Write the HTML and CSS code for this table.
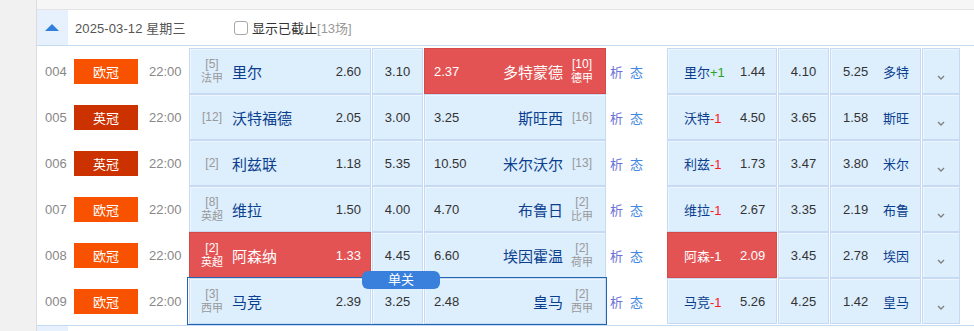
FILE: index.html
```html
<!DOCTYPE html>
<html lang="zh-CN">
<head>
<meta charset="utf-8">
<title>赛程</title>
<link rel="stylesheet" href="styles.css">
</head>
<body>
<div class="page">
  <div class="side"></div>
  <div class="main">
    <div class="topband"></div>
    <div class="head">
      <div class="toggle"><span class="tri"></span></div>
      <div class="date">2025-03-12 星期三</div>
      <label class="show"><span class="chk"></span><span class="show-t">显示已截止</span><span class="cnt">[13场]</span></label>
    </div>
    <div class="rows">
      <div class="row">
        <div class="num">004</div>
        <div class="lg"><span class="badge ucl">欧冠</span></div>
        <div class="time">22:00</div>
        <div class="cell home"><div class="rank"><span>[5]</span><span class="lgn">法甲</span></div><span class="team">里尔</span><span class="odd">2.60</span></div>
        <div class="cell draw">3.10</div>
        <div class="cell away hot"><span class="odd">2.37</span><span class="team">多特蒙德</span><div class="rank"><span>[10]</span><span class="lgn">德甲</span></div></div>
        <div class="ana"><span class="xi">析</span><span class="tai">态</span></div>
        <div class="cell hc1"><span class="hl">里尔<em class="plus">+1</em></span><span class="ho">1.44</span></div>
        <div class="cell hc2">4.10</div>
        <div class="cell hc3"><span class="ho3">5.25</span><span class="hn">多特</span></div>
        <div class="cell hc4"><svg class="chev" width="8" height="5" viewBox="0 0 8 5"><polyline points="1,1 4,4 7,1" fill="none" stroke="#808080" stroke-width="1.4"/></svg></div>
      </div>
      <div class="row">
        <div class="num">005</div>
        <div class="lg"><span class="badge efl">英冠</span></div>
        <div class="time">22:00</div>
        <div class="cell home"><div class="rank"><span>[12]</span></div><span class="team">沃特福德</span><span class="odd">2.05</span></div>
        <div class="cell draw">3.00</div>
        <div class="cell away"><span class="odd">3.25</span><span class="team">斯旺西</span><div class="rank"><span>[16]</span></div></div>
        <div class="ana"><span class="xi">析</span><span class="tai">态</span></div>
        <div class="cell hc1"><span class="hl">沃特<em class="minus">-1</em></span><span class="ho">4.50</span></div>
        <div class="cell hc2">3.65</div>
        <div class="cell hc3"><span class="ho3">1.58</span><span class="hn">斯旺</span></div>
        <div class="cell hc4"><svg class="chev" width="8" height="5" viewBox="0 0 8 5"><polyline points="1,1 4,4 7,1" fill="none" stroke="#808080" stroke-width="1.4"/></svg></div>
      </div>
      <div class="row">
        <div class="num">006</div>
        <div class="lg"><span class="badge efl">英冠</span></div>
        <div class="time">22:00</div>
        <div class="cell home"><div class="rank"><span>[2]</span></div><span class="team">利兹联</span><span class="odd">1.18</span></div>
        <div class="cell draw">5.35</div>
        <div class="cell away"><span class="odd">10.50</span><span class="team">米尔沃尔</span><div class="rank"><span>[13]</span></div></div>
        <div class="ana"><span class="xi">析</span><span class="tai">态</span></div>
        <div class="cell hc1"><span class="hl">利兹<em class="minus">-1</em></span><span class="ho">1.73</span></div>
        <div class="cell hc2">3.47</div>
        <div class="cell hc3"><span class="ho3">3.80</span><span class="hn">米尔</span></div>
        <div class="cell hc4"><svg class="chev" width="8" height="5" viewBox="0 0 8 5"><polyline points="1,1 4,4 7,1" fill="none" stroke="#808080" stroke-width="1.4"/></svg></div>
      </div>
      <div class="row">
        <div class="num">007</div>
        <div class="lg"><span class="badge ucl">欧冠</span></div>
        <div class="time">22:00</div>
        <div class="cell home"><div class="rank"><span>[8]</span><span class="lgn">英超</span></div><span class="team">维拉</span><span class="odd">1.50</span></div>
        <div class="cell draw">4.00</div>
        <div class="cell away"><span class="odd">4.70</span><span class="team">布鲁日</span><div class="rank"><span>[2]</span><span class="lgn">比甲</span></div></div>
        <div class="ana"><span class="xi">析</span><span class="tai">态</span></div>
        <div class="cell hc1"><span class="hl">维拉<em class="minus">-1</em></span><span class="ho">2.67</span></div>
        <div class="cell hc2">3.35</div>
        <div class="cell hc3"><span class="ho3">2.19</span><span class="hn">布鲁</span></div>
        <div class="cell hc4"><svg class="chev" width="8" height="5" viewBox="0 0 8 5"><polyline points="1,1 4,4 7,1" fill="none" stroke="#808080" stroke-width="1.4"/></svg></div>
      </div>
      <div class="row">
        <div class="num">008</div>
        <div class="lg"><span class="badge ucl">欧冠</span></div>
        <div class="time">22:00</div>
        <div class="cell home hot"><div class="rank"><span>[2]</span><span class="lgn">英超</span></div><span class="team">阿森纳</span><span class="odd">1.33</span></div>
        <div class="cell draw">4.45</div>
        <div class="cell away"><span class="odd">6.60</span><span class="team">埃因霍温</span><div class="rank"><span>[2]</span><span class="lgn">荷甲</span></div></div>
        <div class="ana"><span class="xi">析</span><span class="tai">态</span></div>
        <div class="cell hc1 hot"><span class="hl">阿森<em>-1</em></span><span class="ho">2.09</span></div>
        <div class="cell hc2">3.45</div>
        <div class="cell hc3"><span class="ho3">2.78</span><span class="hn">埃因</span></div>
        <div class="cell hc4"><svg class="chev" width="8" height="5" viewBox="0 0 8 5"><polyline points="1,1 4,4 7,1" fill="none" stroke="#808080" stroke-width="1.4"/></svg></div>
      </div>
      <div class="row sel">
        <div class="num">009</div>
        <div class="lg"><span class="badge ucl">欧冠</span></div>
        <div class="time">22:00</div>
        <div class="cell home"><div class="rank"><span>[3]</span><span class="lgn">西甲</span></div><span class="team">马竞</span><span class="odd">2.39</span></div>
        <div class="cell draw">3.25</div>
        <div class="cell away"><span class="odd">2.48</span><span class="team">皇马</span><div class="rank"><span>[2]</span><span class="lgn">西甲</span></div></div>
        <div class="ana"><span class="xi">析</span><span class="tai">态</span></div>
        <div class="cell hc1"><span class="hl">马竞<em class="minus">-1</em></span><span class="ho">5.26</span></div>
        <div class="cell hc2">4.25</div>
        <div class="cell hc3"><span class="ho3">1.42</span><span class="hn">皇马</span></div>
        <div class="cell hc4"><svg class="chev" width="8" height="5" viewBox="0 0 8 5"><polyline points="1,1 4,4 7,1" fill="none" stroke="#808080" stroke-width="1.4"/></svg></div>
        <div class="outline"></div>
        <div class="single">单关</div>
      </div>
    </div>
    <div class="head next">
      <div class="toggle"></div>
    </div>
  </div>
</div>
</body>
</html>
```

FILE: styles.css
```css
* { box-sizing: border-box; }
html, body { margin: 0; padding: 0; }
body {
  font-family: "Liberation Sans", "Noto Sans CJK SC", sans-serif;
  font-size: 13px;
  color: #333;
  background: #fff;
  overflow: hidden;
  height: 331px;
}
.page { display: flex; width: 974px; height: 331px; }
.side { width: 37px; flex: none; background: #f1f1f1; border-right: 1px solid #dcdcdc; }
.main { flex: 1; min-width: 0; }
.topband { height: 10px; background: #f6f6f6; border-bottom: 1px solid #e3e3e3; }
.head { height: 36px; display: flex; align-items: center; border-bottom: 1px solid #c4dbf4; }
.toggle { width: 31px; height: 100%; background: #e7f1fd; display: flex; align-items: center; justify-content: center; flex: none; }
.tri { width: 0; height: 0; border-left: 7px solid transparent; border-right: 7px solid transparent; border-bottom: 7px solid #2f80de; margin-left: -2px; }
.date { margin-left: 7px; color: #555; font-size: 13px; width: 159px; letter-spacing: 0.1px; }
.show { display: flex; align-items: center; font-size: 13px; }
.chk { width: 14px; height: 14px; border: 1px solid #a8a8a8; border-radius: 3px; background: #fff; margin-right: 4px; }
.show-t { color: #333; }
.cnt { color: #999; }

.rows { padding-top: 2px; padding-bottom: 1px; border-bottom: 1px solid #c4dbf4; }
.row { display: flex; height: 46px; align-items: stretch; position: relative; }
.num { width: 37px; padding-left: 8px; color: #888; display: flex; align-items: center; font-size: 13px; }
.lg { width: 64px; display: flex; align-items: center; }
.badge { width: 64px; height: 25px; display: flex; align-items: center; justify-content: center; color: #fff; font-size: 13px; }
.ucl { background: #f85100; }
.efl { background: #cb3200; }
.time { width: 51px; padding-left: 11px; color: #888; display: flex; align-items: center; font-size: 13px; }

.cell {
  background: #ddeefd;
  border: 1px solid #c6dbf3;
  box-shadow: inset 1px 1px 0 #eef7ff;
  display: flex;
  align-items: center;
  font-size: 13px;
  color: #333;
}
.cell.hot { background: #e35353; border-color: #d44a4a; box-shadow: none; color: #fff; }
.home { width: 182px; padding-left: 7px; padding-right: 9px; }
.draw { width: 51px; margin-left: 1px; justify-content: center; }
.away { width: 182px; margin-left: 1px; padding-left: 9px; padding-right: 8px; }
.rank { width: 30px; display: flex; flex-direction: column; align-items: center; color: #999; font-size: 12px; line-height: 14px; flex: none; }
.rank .lgn { font-size: 11px; }
.hot .rank { color: #fff; }
.team { font-size: 15px; color: #0b3f8e; }
.hot .team { color: #fff; }
.home .team { margin-left: 5px; }
.home .odd { margin-left: auto; }
.away .team { margin-left: auto; margin-right: 4px; }

.ana { width: 61px; padding-left: 4px; display: flex; align-items: center; font-size: 13px; }
.xi { color: #6a72d6; }
.tai { color: #3f89e2; margin-left: 7px; }

.hc1 { width: 110px; padding-left: 16px; }
.hl { width: 56px; color: #0b3f8e; }
.hl em { font-style: normal; }
.plus { color: #27a327; }
.minus { color: #ff1a1a; }
.hot .hl { color: #fff; }
.hc2 { width: 51px; margin-left: 1px; justify-content: center; }
.hc3 { width: 91px; margin-left: 1px; padding-left: 12px; }
.ho3 { width: 40px; }
.hn { color: #0b3f8e; }
.hc4 { width: 38px; margin-left: 1px; justify-content: center; }
.chev { display: block; margin-top: 13px; }

.outline { position: absolute; left: 150px; top: -1px; width: 420px; height: 48px; border: 1px solid #2465b2; pointer-events: none; }
.single { position: absolute; left: 325px; top: -7px; width: 78px; height: 18px; background: #3880dc; color: #fff; font-size: 13px; line-height: 18px; text-align: center; border-radius: 6px; z-index: 2; }

.head.next { height: 5px; border-bottom: none; }
```
